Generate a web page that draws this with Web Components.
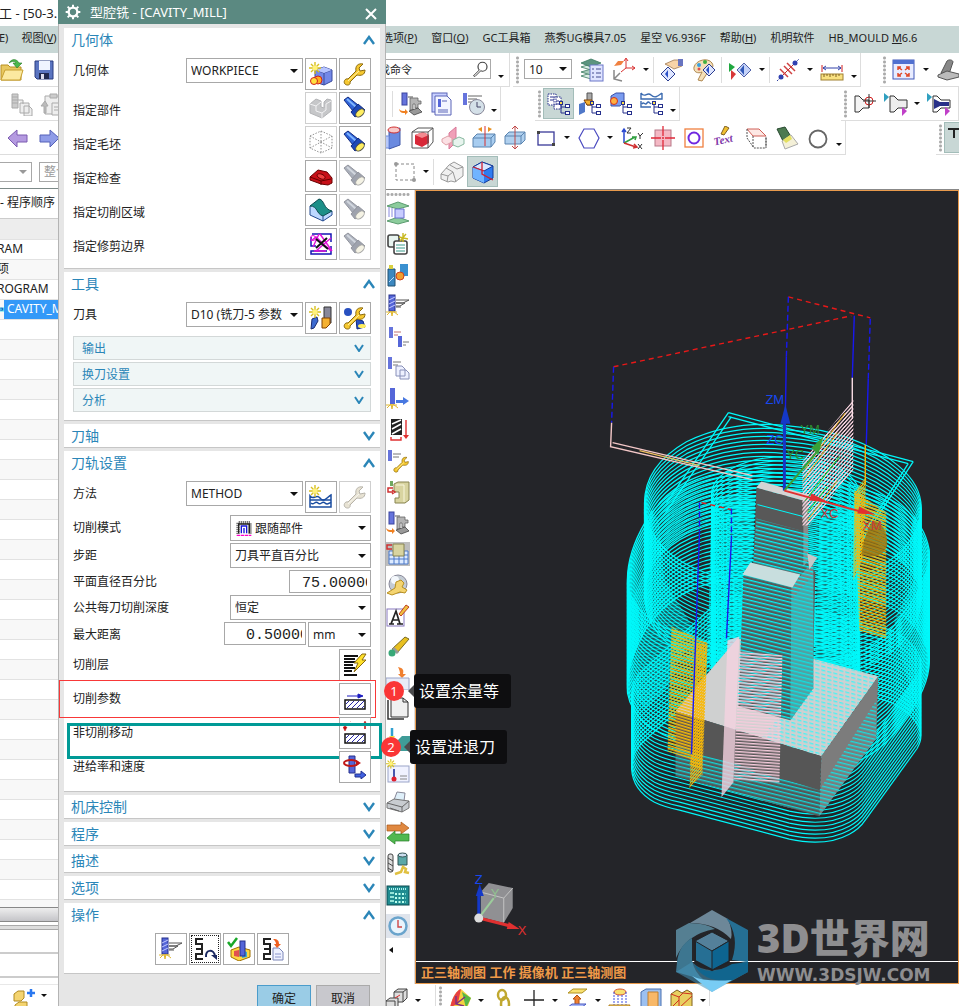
<!DOCTYPE html>
<html lang="zh-CN">
<head>
<meta charset="utf-8">
<title>型腔铣</title>
<style>
    body {
        margin: 0;
        font-family: "Noto Sans", "Noto Sans CJK SC", sans-serif;
        font-size: 12px;
        color: #222;
        background: #fff;
    }
</style>
</head>
<body>
<cam-app></cam-app>

<script>
// ---------- icon parts ----------
const WRENCH = '<path d="M2 22c-2-2 0-6 3-5l8-8c-1-5 2-8 7-7l-4 4 1 3 5-1c0 5-4 6-8 5l-7 7c1 3-3 4-5 2z" fill="#f6c830" stroke="#8a6a10"/><path d="M5 19L16 9" stroke="#fff3a8" fill="none"/>';
const TORCH = '<path d="M1 4l4-3 10 8-5 6z" fill="#2f63d8" stroke="#102a80"/><path d="M4 3l9 8" stroke="#7fb4ff" stroke-width="2"/><path d="M15 8l-7 8 4 5 10-7z" fill="#1d48b8" stroke="#102a80"/><ellipse cx="17" cy="17" rx="5" ry="3" transform="rotate(-40 17 17)" fill="#ffee60" stroke="#554"/>';
const STAR = '<path d="M6 0v12M0 6h12M2 2l8 8M10 2l-8 8" stroke="#d8c020" stroke-width="1.4"/><circle cx="6" cy="6" r="2.5" fill="#fff27a"/>';
const CUTTER = '<rect x="3" y="1" width="6" height="16" fill="#5566d8" stroke="#26308c"/><path d="M3 6l6-3M3 10l6-3M3 14l6-3" stroke="#c5ccff"/>';
const SPARK = '<path d="M1 21l4-4 1 5 1-5 5 4M0 18h11" stroke="#e0b830" fill="none"/>';
const PATHS = '<path d="M10 6h13l-6 3h-7M10 9h9l-5 3h-4M10 13h5" stroke="#555" fill="none"/>';
const PAGE = '<path d="M12 11h6l4 4v8H12z" fill="#eef1ff" stroke="#7c86b8"/><path d="M14 17h6M14 20h6" stroke="#8a94cc"/>';
const CUBE = '<path d="M6 8l9-3 8 3v11l-8 4-9-3z" fill="#7388e8" stroke="#3a4a9c"/><path d="M6 8l9 3 8-3M15 11v12" fill="none" stroke="#3a4a9c"/><path d="M6 8l9-3 8 3-8 3z" fill="#b6c4ff"/>';
const TREE = '<path d="M14 12v9M14 15h4M14 21h4" stroke="#26308c" fill="none"/><rect x="12.500" y="9.500" width="3" height="3" fill="#ffe14a" stroke="#26308c"/><rect x="18.500" y="12.500" width="4" height="3" fill="#fff" stroke="#26308c"/><rect x="18.500" y="19.500" width="4" height="3" fill="#fff" stroke="#26308c"/>';
const MACHINE = '<path d="M11 6h8v3h3v3h-3v4h-3v-4h-2v6h-3z" fill="#b4b4b4" stroke="#666" stroke-width=".8"/><path d="M10 19l9-3 4 4-8 3z" fill="#999" stroke="#444" stroke-width=".8"/>';
const ZIGZAG = '<path d="M10 2H3v5h6v5H3M9 12v5H3v5h7" fill="none" stroke="#222" stroke-width="2"/>';
const HATCH = '<rect x="2" y="13" width="20" height="9" fill="#fff" stroke="#111" stroke-width="1.500"/><path d="M4 21l7-7M9 21l7-7M14 21l7-7M3 17l3-3M19 21l2-2" stroke="#2a2aa8"/>';

const ICONS = {
    folder: '<path d="M1 7h7l2 2h11v13H1z" fill="#e8c860" stroke="#b89020"/><path d="M1 22l4-10h18l-3 10z" fill="#fbe9a0" stroke="#c8a030"/><path d="M9 5c3-5 8-4 10 0h3l-5 5-4-5h3c-1-2-4-2-7 0z" fill="#4cb84c" stroke="#287a28" stroke-width=".6"/>',
    floppy: '<path d="M3 3h18v18H5l-2-2z" fill="#5a74c0" stroke="#2a3c80"/><rect x="7" y="3" width="11" height="9" fill="#f0f4ff"/><rect x="7" y="15" width="10" height="6" fill="#222a50"/><rect x="9" y="16" width="3" height="5" fill="#dde"/>',
    pasteTree: '<g stroke="#aaa" fill="#eee"><path d="M3 2h6v14H3zM3 5h6M3 8h6M3 11h6" fill="#ccc"/><path d="M9 8h5v4M11 11h9v10H11zM15 14h5l3 3v7h-8z"/></g>',
    clipboard: '<g stroke="#aaa" fill="#eee"><path d="M5 4h17v18H5z"/><path d="M10 2h7v4h-7z" fill="#ccc"/><path d="M12 11h10v12H12zM14 15h6M14 18h6"/><path d="M1 14l4-5 3 5H6v7H4v-7z" fill="#bbb"/></g>',
    arrowL: '<path d="M2 12l9-8v5h10v7H11v5z" fill="#b49ae0" stroke="#7a5ab0"/>',
    arrowR: '<path d="M22 12l-9-8v5H3v7h10v5z" fill="#8f9ce8" stroke="#5560b8"/>',
    gear: '<circle cx="12" cy="12" r="6.500" fill="none" stroke="#fff" stroke-width="3.500"/><path d="M12 1v5M12 18v5M1 12h5M18 12h5M4 4l4 4M16 16l4 4M20 4l-4 4M8 16l-4 4" stroke="#fff" stroke-width="3"/>',
    geoNew: CUBE + '<circle cx="9" cy="18" r="4" fill="#ffb020" stroke="#d02020"/><circle cx="5" cy="19" r="3.500" fill="#ffe040" stroke="#d02020"/>' + STAR,
    wrench: WRENCH,
    torch: TORCH,
    part: '<path d="M1 8l6-5 5 2v6l3 1V6l3-3 4 1v11l-9 7-12-5z" fill="#8890a8" stroke="#606880"/><path d="M1 8l6 2v5l6 2 4-3V8l5-3M13 17v5M7 10l5-4" fill="none" stroke="#e4e6f0"/>',
    blank: '<path d="M1 6l11-5 11 5v12l-11 5-11-5zM1 6l11 6 11-6M12 12v11M12 1v11M1 18l11-6 11 6" fill="none" stroke="#222" stroke-dasharray="1.500 1.500"/>',
    check: '<path d="M1 13l8-7 9 2 5 6v5l-4 2-7-1-11-4z" fill="#c81018" stroke="#600"/><path d="M1 13l11 4 10-2M12 17v4" stroke="#600" fill="none"/><path d="M8 11c1-3 9 0 8 3s-8 0-8-3z" fill="#f04040" stroke="#600"/>',
    area: '<path d="M1 8v9l13 6 9-6v-4" fill="#bcd8ff" stroke="#234a90"/><path d="M1 8L10 1c6 1 4 10 13 12l-9 5C7 16 9 8 1 8z" fill="#1c8f88" stroke="#0c4a50"/><path d="M14 18v5" stroke="#234a90"/>',
    trim: '<path d="M3 2h19v8M22 14v8H2v-3h16M2 5v9h5" fill="none" stroke="#1414b4" stroke-width="1.500"/><path d="M11 2l12 17M4 15L10 2M7 19L22 6M2 9l5-4 15 14M5 19h12" stroke="#e010d8" stroke-width="1.400" fill="none"/><circle cx="4" cy="6" r="2.500" fill="none" stroke="#e010d8"/><path d="M7 7l12 10M18 6L7 16" stroke="#111" stroke-width="2"/>',
    toolNew: '<path d="M15 1h7v16h-7z" fill="#889" stroke="#333"/><path d="M13 12h8v6l-4 4h-4z" fill="#f4b030" stroke="#804000"/><path d="M3 13l5-2 1 4-4 7-3 1z" fill="#3c6ad0" stroke="#1a2c70"/>' + STAR,
    toolEdit: '<circle cx="5" cy="6" r="4" fill="#2850c0"/><path d="M13 13l7 2 2 6-8 2z" fill="#2850c0" stroke="#102a80"/><ellipse cx="19" cy="20" rx="4" ry="2" fill="#ffee60"/>' + WRENCH,
    methodNew: '<path d="M1 11c4 5 6-3 10 2s6 0 11-3v12H1z" fill="#fff" stroke="#1a4ca0" stroke-width="1.500"/><path d="M1 15h21M2 18c3 3 4-3 7 0s4-3 7 0 4-1 6 0" fill="none" stroke="#1a4ca0" stroke-width="1.500"/>' + STAR,
    cutLevels: '<path d="M1 3h14M1 6h11M1 9h14M1 12h9M1 15h11M1 18h8M1 22h13" stroke="#111" stroke-width="1.800"/><path d="M19 1h4l-4 6h4L11 19l4-9h-4z" fill="#ffe12a" stroke="#8a6a10"/>',
    cutParam: HATCH + '<path d="M4 9h14M15 7l5 2-5 2z" stroke="#1c1cc0" fill="#1c1cc0"/>',
    nonCut: HATCH + '<path d="M2 2v6M22 8V2" stroke="#c01010" stroke-width="1.500"/><path d="M0 6h4l-2 4zM20 4h4l-2-4zM7 0h1" fill="#c01010" stroke="#c01010" stroke-width=".5"/>',
    feed: '<path d="M6 1h6v17H6z" fill="#5566d8" stroke="#26308c"/><ellipse cx="8" cy="8" rx="7" ry="3" fill="none" stroke="#c01818" stroke-width="2"/><path d="M13 5l5 3-5 3z" fill="#c01818"/><path d="M12 19h6v-3l5 4-5 4v-2h-6z" fill="#4060e0" stroke="#203090"/>',
    generate: CUTTER + PATHS + SPARK,
    replay: ZIGZAG + '<path d="M13 20c-1-8 8-8 9-1" fill="none" stroke="#1a2860" stroke-width="2"/><path d="M18 18h6v5z" fill="#1a2860"/>',
    verify: '<path d="M4 13l8-3 11 3v7l-11 4-8-4z" fill="#ffd840" stroke="#a07000"/><path d="M7 14l5-1v7l-5-1z" fill="#e05050"/><path d="M15 13l5 2v5l-5 1z" fill="#40b0d0"/><rect x="13" y="4" width="5" height="15" fill="#5566d8" stroke="#26308c"/><path d="M1 5l3 4 6-8" fill="none" stroke="#18a828" stroke-width="2.500"/>',
    listOut: ZIGZAG + PAGE + '<path d="M12 2c5 0 6 2 6 5h2l-4 4-3-4h2c0-2-1-3-3-5z" fill="#f06020"/>',
    followPart: '<path d="M3 21V4h18v17" fill="none" stroke="#777" stroke-width="5" stroke-dasharray="2 1"/><path d="M4 20V6h16v14" fill="none" stroke="#222" stroke-width="2"/><path d="M8 20V9h8v11M12 20v-8" stroke="#1414d8" stroke-width="2" fill="none"/><path d="M1 23h22" stroke="#f0c" stroke-width="2" stroke-dasharray="5 1"/>',
    search: '<circle cx="14" cy="9" r="6" fill="#fff" stroke="#444" stroke-width="1.600"/><path d="M10 13l-8 8 2 1 8-8" fill="#fff" stroke="#444" stroke-width="1.300"/>',
    layers: '<g stroke="#3a7a60" stroke-width=".8"><path d="M1 18l10-3 10 3-10 3z" fill="#ddeee6"/><path d="M1 14l10-3 10 3-10 3z" fill="#a8ccbc"/><path d="M1 9l10-3 10 3-10 3z" fill="#ddeee6"/><path d="M1 5l10-4 10 4-10 4z" fill="#5c9480"/></g><rect x="10" y="7" width="13" height="16" fill="#dfe4ff" stroke="#6a76c8"/><path d="M12 11h2M16 11h5M12 15h2M16 15h5M12 19h2M16 19h5" stroke="#444c90"/>',
    csys: '<path d="M2 8l4-5h6l-3 4z" fill="#f08040"/><path d="M14 10V1M14 10h9M14 10l-5 4M12 3l2-3 2 3M20 8l3 2-3 2" fill="none" stroke="#d83030"/><path d="M2 12v9l8 2M2 21l6-6" fill="none" stroke="#888" stroke-width="1.500"/>',
    hand: '<path d="M5 6l9-4h8v6l-8 3-5-3z" fill="#f8d4a8" stroke="#a07850" stroke-width=".8"/><path d="M18 1h5v7h-5z" fill="#6874c0"/><path d="M1 16l7-7 7 7-7 7z" fill="#dfe6ff" stroke="#2a3c90"/><path d="M5 16l3-4v8z" fill="#2a50c8"/>',
    palette: '<path d="M2 9C4 2 16-1 20 5c3 5-2 6-4 9l-6 9-4-1 4-8c-4 2-9 0-8-5z" fill="#f4e0b8" stroke="#b08850"/><circle cx="7" cy="7" r="2" fill="#38a0e0"/><circle cx="13" cy="4" r="2" fill="#40b040"/><circle cx="7" cy="11" r="1.500" fill="#e05050"/><path d="M11 12l6-6 6 6-6 6z" fill="#dfe6ff" stroke="#2a3c90"/><path d="M14 12l3-4v8z" fill="#2a50c8"/>',
    play: '<path d="M1 5l6 4-6 5z" fill="#20a840"/><path d="M3 12l5 4-5 6z" fill="#d83838"/><path d="M9 12l7-7 7 7-7 7z" fill="#c4d2f8" stroke="#5060a8"/><path d="M12 12l4-5v10z" fill="#3058b8"/>',
    dims: '<path d="M5 19L19 5" stroke="#c03030"/><path d="M4 11l8 8M8 8l8 8M11 5l8 8" stroke="#d04040" stroke-width="1.500"/><path d="M1 23l6-6M17 7l6-6" stroke="#3040a0" stroke-dasharray="2 1"/><circle cx="5" cy="19" r="2.500" fill="#3040b0"/><circle cx="19" cy="5" r="2.500" fill="#3040b0"/>',
    ruler: '<path d="M2 7v7M22 7v7" stroke="#d02020"/><path d="M3 10h18M6 8l-3 2 3 2M18 8l3 2-3 2" fill="none" stroke="#3040a8"/><rect x="1" y="16" width="22" height="6" fill="#f8e080" stroke="#a08030"/><path d="M4 16v3M7 16v2M10 16v3M13 16v2M16 16v3M19 16v2" stroke="#806020"/>',
    fit: '<rect x="1" y="2" width="21" height="19" fill="#e8ecff" stroke="#4058b8"/><rect x="1" y="2" width="21" height="4" fill="#5070d0"/><path d="M6 12V9h3M14 9h3v3M6 15v3h3M17 15v3h-3M6 9l4 3M17 9l-4 3M6 18l4-3M17 18l-4-3" fill="none" stroke="#e04828" stroke-width="1.500"/>',
    device: '<path d="M5 15L11 3c2-2 6-1 6 1l-4 12z" fill="#888" stroke="#555"/><path d="M2 17l9-4 12 3v3l-12 3-9-3z" fill="#bbb" stroke="#555"/>',
    post: '<rect x="3" y="1" width="5" height="12" fill="#6674dc" stroke="#3a44a0"/><path d="M9 5h5" stroke="#555"/>' + MACHINE + '<path d="M0 17c1 4 3 4 6 4v2l3-3-3-3v2c-3 0-4 0-6-2z" fill="#f08020"/>',
    shopDoc: '<rect x="2" y="1" width="15" height="19" fill="#c8d0ff" stroke="#5a64b8"/><path d="M5 4h12l4 4v15H5z" fill="#f4f6ff" stroke="#5a64b8"/><path d="M8 7h3v8H8z" fill="#5566d8"/><path d="M12 9h5M8 18h10M8 20h10" stroke="#5a64b8"/>',
    clock: '<rect x="2" y="1" width="4" height="12" fill="#6674dc"/><path d="M7 4h14M7 7h9M7 10h5" stroke="#666"/><circle cx="16" cy="15" r="7.500" fill="#d4e0e8" stroke="#889"/><path d="M16 10v5h4" stroke="#446" fill="none"/>',
    progView: '<path d="M1 2h8v11H1zM7 5h7v12H7z" fill="#fff" stroke="#26308c" stroke-dasharray="1.500 1"/><path d="M3 5h4M3 8h4M9 9h3M9 12h3" stroke="#26308c"/>' + TREE,
    toolView: '<path d="M9 1h5v12H9z" fill="#aaa" stroke="#555"/><path d="M6 8h8v5H9z" fill="#f4b030" stroke="#804000"/><path d="M1 12l6-2v10l-6 3z" fill="#5078c8"/>' + TREE,
    geomView: '<path d="M2 4l5-3h8v9l-4 4H2z" fill="#7a9cf0" stroke="#3a50a8"/><circle cx="5" cy="9" r="3.500" fill="#ffb040" stroke="#d03020"/>' + TREE,
    methodView: '<path d="M1 1c4 6 6-2 10 2s7 1 11-2M1 1v6h21V1M1 9v6h10M2 12c2-3 3 2 5-1s3 2 4 0" fill="none" stroke="#3a6ab0" stroke-width="1.400"/>' + TREE,
    holeTarget: '<path d="M2 4h4l4 4h6v8h-6l-4 4H2z" fill="#f4f4f4" stroke="#333"/><circle cx="16" cy="9" r="4" fill="none" stroke="#d02020"/><path d="M10 9h13M16 2v14" stroke="#333"/>',
    holeA: '<path d="M0 1l5 4-5 5z" fill="#30a0c0"/><path d="M6 4h4l4 4h9v8h-9l-4 4H6z" fill="#eee" stroke="#333"/><path d="M18 15l5 4-5 5z" fill="#c040c8"/>',
    holeB: '<path d="M0 1l5 4-5 5z" fill="#30a0c0"/><path d="M6 4h4l4 4h9v8h-9l-4 4H6z" fill="#fff" stroke="#333"/><path d="M7 7l6 3h9v4h-9l-6 3z" fill="#283088"/><path d="M18 15l5 4-5 5z" fill="#c040c8"/>',
    tube: '<path d="M10 5l11-3v17L10 23z" fill="#6a8ae0" stroke="#4058a8"/><ellipse cx="15" cy="4" rx="6" ry="3" fill="#f8c8c8" stroke="#d03030"/><path d="M3 10h7v12H3z" fill="#b8c8f8" stroke="#6a8ae0"/>',
    cubeRed: '<path d="M5 9l8-3 6 3v8l-7 4-7-3z" fill="#d82838"/><path d="M5 9l7 3 7-3-6-3z" fill="#f48a90"/><path d="M2 6l6-4h15v14l-5 6H2zM2 6h16v16M18 6l5-4" fill="none" stroke="#555"/>',
    mirror: '<path d="M8 7l7-6v15l-7 7z" fill="#f0a0b8" stroke="#d87898"/><path d="M1 13l6-3 4 2v4l-6 3-4-3z" fill="#fbe0e4" stroke="#e0a0a8"/><path d="M12 14l6-3 5 2v5l-6 3-5-2z" fill="#e8f4ee" stroke="#88b8a0"/>',
    splitA: '<path d="M1 12l4-4h18v8l-4 5H1z" fill="#a8cdf0" stroke="#5a84b0"/><path d="M1 12h18l4-4M19 12v9" fill="none" stroke="#5a84b0"/><path d="M13 0v20" stroke="#d83030"/><path d="M10 1v5L6 3zM16 1v5l4-3z" fill="#e89020"/>',
    splitB: '<path d="M2 10l4-4h16v8l-4 4H2z" fill="#b0d0ee" stroke="#5a84b0"/><path d="M2 10h16l4-4M18 10v8" fill="none" stroke="#5a84b0"/><path d="M12 0v23M9 3l3-3 3 3M9 20l3 3 3-3" fill="none" stroke="#c04848"/>',
    rectSel: '<rect x="4" y="6" width="16" height="13" fill="none" stroke="#3a3a98" stroke-width="1.300"/><path d="M3 5h3v3H3zM18 17h3v3h-3z" fill="#444"/>',
    hex: '<path d="M7 3h10l5 9-5 10H7L2 12z" fill="#fff" stroke="#4a4ac0" stroke-width="1.200"/>',
    xyz: '<path d="M4 17V4M2 6l2-3 2 3" fill="none" stroke="#2a48d0" stroke-width="1.500"/><path d="M4 17l11-6M12 11h4l-1 3" fill="none" stroke="#30a040" stroke-width="1.500"/><path d="M4 17l12 4M14 18l3 3-4 1" fill="none" stroke="#d03030" stroke-width="1.500"/><path d="M7 2h4l-4 5h4M18 7l2 3 3-3M20 10v3M18 18l4 5M22 18l-4 5" fill="none" stroke="#333"/>',
    target: '<rect x="4" y="4" width="16" height="16" fill="#f4b8c4" stroke="#b87888"/><path d="M0 12h10M14 12h10M12 0v10M12 14v10M11 12h2" stroke="#e02838" stroke-width="1.300"/>',
    ring: '<rect x="3" y="3" width="18" height="18" fill="#fff" stroke="#f08040" stroke-width="1.300"/><circle cx="12" cy="12" r="5.500" fill="none" stroke="#7028e0" stroke-width="2"/>',
    text: '<text x="1" y="18" font-family="Liberation Serif, serif" font-weight="bold" font-style="italic" font-size="11" fill="#8038a8" transform="rotate(-12 8 16)">Text</text><path d="M8 8l4-8 4 2-5 7z" fill="#f0c030" stroke="#806020"/>',
    bbox: '<path d="M3 3h12l7 7H9z" fill="#fde8e4" stroke="#d06058"/><path d="M3 3v9l7 10h12V10M9 10v11M22 12v9" fill="none" stroke="#555" stroke-dasharray="2 1"/>',
    lamp: '<path d="M2 3l8-2 5 8-7 6z" fill="#4c7a50" stroke="#284a30"/><path d="M7 15l9-6 7 9-13 5z" fill="#f4f0d8" stroke="#aaa"/><path d="M8 14l7-5 2 4-6 4z" fill="#e4e060"/>',
    circle: '<circle cx="12" cy="13" r="8.500" fill="none" stroke="#666" stroke-width="1.800"/>',
    tm: '<path d="M0 3h11M6 3v9" stroke="#222" stroke-width="2"/><path d="M12 12V3h9v9M16 3v8" fill="none" stroke="#d02020" stroke-width="1.800"/>',
    dashed: '<rect x="3" y="4" width="18" height="16" fill="none" stroke="#888" stroke-dasharray="3 2"/><circle cx="3" cy="4" r="2" fill="#999"/><circle cx="21" cy="20" r="2" fill="#999"/>',
    blocks: '<path d="M1 14l8-9 5-3 9 5v9l-8 6-4-1-3 1-7-3z" fill="#f0f0f0" stroke="#999"/><path d="M6 8l7 4 3 10M10 5l7 4 6-2M8 16l-1 6M13 12l-5 4-7-2" fill="none" stroke="#999"/>',
    cubeBlue: '<path d="M2 7l9-5 11 4v12l-9 5-11-5z" fill="#2e7cf0" stroke="#123a98"/><path d="M2 7l11 4 9-5-11-4z" fill="#d8e6ff" stroke="#123a98"/><path d="M2 7l11 4v12l-11-5z" fill="#70b4ff"/><path d="M11 2v12l11 6M2 7l11 4" fill="none" stroke="#d02030" stroke-width="1.300"/>',
    stackGreen: '<path d="M1 5l11-4 11 4-11 3zM1 20l11-4 11 4-11 3z" fill="#8ccc9c" stroke="#5c9c70"/><path d="M9 8h9v9H9z" fill="#c8ccff" stroke="#6a70d0"/><path d="M3 6v10M6 7v9" stroke="#8a8ae0"/>',
    sheets: '<rect x="2" y="3" width="11" height="12" rx="2" fill="#e8f4f0" stroke="#444" stroke-width="1.600"/><rect x="8" y="9" width="13" height="13" rx="2" fill="#fff" stroke="#444" stroke-width="1.600"/><path d="M10 13h9M10 16h9M10 19h9" stroke="#3a9c8c"/><path d="M13 5l9 2M17 1v9M14 9l6-7" stroke="#c8b820" stroke-width="1.400"/>',
    toolCrt: '<path d="M2 6h7v17H2z" fill="#3c88c0" stroke="#205070"/><path d="M3 2h4v4H3z" fill="#d8d040"/><path d="M14 1h8v12h-8z" fill="#3a90d0"/><circle cx="14" cy="13" r="4" fill="#f0a030" stroke="#d04020"/><path d="M3 19l5-5" stroke="#bdf"/>',
    opCopy: '<rect x="3" y="2" width="4" height="11" fill="#6674dc"/><path d="M8 7h7M8 10h4" stroke="#c07070"/><rect x="12" y="11" width="4" height="11" fill="#5566d8"/><path d="M17 17h6M17 20h3" stroke="#777"/>',
    opPages: '<rect x="2" y="1" width="4" height="12" fill="#6674dc"/><path d="M7 6h8M7 9h5" stroke="#777"/><path d="M10 10h6l3 3v7h-9zM14 14h6l3 3v6h-9z" fill="#eef1ff" stroke="#8890b8"/>',
    opMove: '<rect x="4" y="1" width="5" height="16" fill="#5566d8"/><path d="M10 13h7v-3l6 4-6 4v-2h-7z" fill="#4878e0"/>' + SPARK,
    drillDown: '<path d="M5 1h11v16H5z" fill="#222"/><path d="M6 6l9-4M6 11l9-5M6 16l9-5" stroke="#fff" stroke-width="1.500"/><path d="M5 19v3h10v-3M20 2v16" fill="none" stroke="#e03030" stroke-width="1.400"/><path d="M17 17h6l-3 4z" fill="#e03030"/>',
    opWrench: '<rect x="2" y="1" width="4" height="11" fill="#6674dc"/><path d="M7 5h8M7 8h6" stroke="#777"/><g transform="translate(7 7) scale(.700)">' + WRENCH + '</g>',
    mcImport: '<path d="M8 4l4-2h11v18l-4 3H9v-5h4v-6H8z" fill="#d8d4a0" stroke="#888450"/><path d="M10 5h8v5M18 10v12" stroke="#f8f6dc" fill="none"/><path d="M4 1h3v5H4z" fill="#70a860"/><path d="M7 8H2v4h5M6 10l3 2-3 2" fill="none" stroke="#d03030" stroke-width="1.500"/>',
    mcTable: '<rect x="0" y="0" width="24" height="24" fill="#bdbdbd"/><path d="M3 9h19v13H3zM3 13h19M3 17h19M8 9v13M13 9v13M18 9v13" fill="#dceaff" stroke="#4a78c8"/><path d="M7 2h11v12H7z" fill="#d8d4a0" stroke="#888450"/><path d="M6 3H1v4h5" fill="none" stroke="#d03030" stroke-width="1.500"/>',
    ballWrench: '<circle cx="12" cy="11" r="9" fill="#c4ccd4" stroke="#889"/><circle cx="9" cy="7" r="4" fill="#f4f8fc"/><path d="M1 20l8-5 1-6 5-2 3 3-2 4 5 3-2 3-5-1-8 3z" fill="#f4d470" stroke="#b89020"/>',
    editA: '<rect x="1" y="5" width="17" height="17" fill="#fff" stroke="#8878c0"/><path d="M3 20h5M5 20l5-13 4 13M11 20h6M7 16h5" stroke="#222" stroke-width="1.700" fill="none"/><path d="M13 10l7-9 3 2-8 9z" fill="#f0c040" stroke="#c04020"/>',
    pencil: '<path d="M6 14L19 2l4 2-12 14z" fill="#e8c020" stroke="#7a6a20"/><path d="M7 13l5 5" stroke="#999" stroke-width="3"/><circle cx="6" cy="18" r="3.500" fill="#38a878"/>',
    insert: '<path d="M12 1c5 1 6 3 5 7h3l-4 4-4-4h2c0-3-1-5-2-7z" fill="#f08030"/><path d="M0 12h23v12H0z" fill="#e8ecf8" stroke="#9aa4c8"/>',
    pages: '<path d="M2 3v19h16" fill="none" stroke="#333" stroke-width="1.500"/><path d="M5 1h12l5 4v15H5z" fill="#f0f0f0" stroke="#333"/><path d="M17 1v4h5" fill="none" stroke="#333"/>',
    teal: '<path d="M12 12l4-4h8v15H12z" fill="#3f9c98"/><path d="M6 0v10" stroke="#30a0d0" stroke-width="2.500"/><path d="M3 8h6l-3 4z" fill="#f0e040"/>',
    thermo: '<rect x="2" y="7" width="21" height="16" fill="#f0f2ff" stroke="#9aa4c8"/><path d="M8 10v10" stroke="#4858b0" stroke-width="2"/><circle cx="8" cy="20" r="2.500" fill="#e02030"/><path d="M14 17h7M14 20h7" stroke="#888"/><g transform="scale(.800)">' + STAR + '</g>',
    printer: '<path d="M8 10l3-8 8 1-1 8z" fill="#dff0fa" stroke="#889"/><path d="M1 13l7-4 15 2v7l-7 4-15-4z" fill="#c8ccd0" stroke="#777"/><path d="M1 13l15 4 7-6M16 17v5M4 18l9 3" fill="none" stroke="#666"/>',
    swap: '<path d="M1 4h14V1l8 6-8 6V10H1z" fill="#e08840" stroke="#a85818" stroke-width=".7"/><path d="M23 13H9v-3l-8 7 8 6v-3h14z" fill="#50b850" stroke="#288028" stroke-width=".7"/>',
    drills: '<rect x="2" y="2" width="5" height="18" rx="2" fill="#ddd" stroke="#444"/><path d="M2 6l5 3M2 11l5 3M2 16l5 3" stroke="#444"/><path d="M12 3h9v10h-9z" fill="#5aa8a8" stroke="#355"/><ellipse cx="16.500" cy="3" rx="4.500" ry="2" fill="#cde" stroke="#355"/><path d="M9 22l6-2 2-5 3 2-1 3 4 1" fill="none" stroke="#e0c040" stroke-width="2.500"/>',
    panel: '<rect x="1" y="3" width="22" height="19" fill="#1f8c90" stroke="#0c4a50"/><path d="M3 6h17" stroke="#aee" stroke-width="2" stroke-dasharray="1 1"/><path d="M4 10h4M4 14h4M4 18h4" stroke="#bfe" stroke-width="1.500"/><path d="M9 11h11M9 15h11M9 19h11" stroke="#bfe" stroke-width="2" stroke-dasharray="2 1.500"/>',
    history: '<rect x="0" y="0" width="24" height="24" fill="#dfe4ec"/><circle cx="12" cy="12" r="8.500" fill="#e8f4fc" stroke="#6aa4cc" stroke-width="2.500"/><path d="M12 6v7h4" stroke="#d04848" fill="none" stroke-width="1.400"/>',
    cubes: '<g fill="#ddd" stroke="#444"><path d="M9 4l4-3h9v9l-4 4H9z"/><path d="M9 4h9v10M18 4l4-3" fill="none"/><path d="M1 13l4-3h8v9l-3 4H1z"/><path d="M1 13h9v10" fill="none"/></g><path d="M10 10l5-3" stroke="#e03030"/>',
    rainbow: '<path d="M2 20C4 9 9 2 13 1l10 9-5 13z" fill="#f4d040"/><path d="M2 20C4 9 9 2 13 1l-3 14z" fill="#e84040"/><path d="M14 4l9 6-5 10z" fill="#58b848"/><path d="M8 8v8l8 2M8 16l9-7" fill="none" stroke="#803080" stroke-width="1.500"/>',
    chain: '<g fill="none" stroke="#c0a830" stroke-width="2.500"><ellipse cx="11" cy="7" rx="4" ry="5"/><ellipse cx="14" cy="16" rx="4" ry="7"/></g>',
    plus: '<path d="M12 2v20M2 12h20" stroke="#222" stroke-width="1.300"/>',
    extrude: '<path d="M3 5l5-4h14l-5 4z" fill="#f8e070" stroke="#b09020"/><path d="M10 17v-6H8l4-4 4 4h-2v6z" fill="#f08030" stroke="#b05010"/><path d="M2 20l5-4h14l-5 4z" fill="#a8b8f8" stroke="#4858c0"/>',
    boss: '<ellipse cx="12" cy="4" rx="6" ry="3" fill="#f8e070" stroke="#d05030"/><path d="M6 4v13M18 4v13M10 7v11M14 7v11" stroke="#4050e0" stroke-dasharray="2 1"/><path d="M1 17h21l-3 6H1z" fill="#f0c860" stroke="#b08020"/>',
    door: '<path d="M2 4l5-3h15v19l-5 3H2z" fill="#9cc0f0" stroke="#4a70b0"/><path d="M9 4h10v15H9z" fill="#f8b868" stroke="#c08030"/><path d="M15 18h8v5h-8z" fill="#4a70d0"/>',
    crate: '<path d="M1 6l6-4 5 3 5-3 5 3v15l-9 3-12-3z" fill="#e8d060" stroke="#806020"/><path d="M1 6l8 3v13M9 9l4-4 9 1M1 20l8-8M9 20L22 8" fill="none" stroke="#d03020"/>',
    addPart: '<path d="M3 5l4-3h6v7l-3 3H3zM4 16l4-3h8v8H4z" fill="#f4d470" stroke="#b08a20"/><path d="M20 0v8M16 4h8" stroke="#2a78f0" stroke-width="2.500"/>',
    treeTag: '<rect x="0" y="0" width="24" height="24" fill="#50e4ec"/><path d="M2 4h14v12H2" fill="none" stroke="#1414b4" stroke-width="4"/>'
};

function define(name, markup, setup) {
    const template = document.createElement('template');
    template.innerHTML = markup;
    customElements.define(name, class extends HTMLElement {
        constructor() {
            super();
            this.attachShadow({ mode: 'open' });
            this.shadowRoot.appendChild(template.content.cloneNode(true));
        }

        connectedCallback() {
            if (setup) setup(this, this.shadowRoot);
        }
    });
}

// ---------- small pieces ----------
define('nx-icon', `
    <style>
        :host { display: block; width: 24px; height: 24px; flex: none; }
        svg { display: block; width: 100%; height: 100%; }
    </style>
    <svg viewBox="0 0 24 24" aria-hidden="true"></svg>
`, (el, root) => {
    root.querySelector('svg').innerHTML = ICONS[el.getAttribute('name')] || '';
});

define('tool-button', `
    <style>
        :host { display: block; flex: none; width: var(--cell, 31px); height: var(--cell-height, 31px); }
        button {
            display: flex; align-items: center; justify-content: center;
            width: 100%; height: 100%; padding: 0; border: 1px solid transparent; background: none;
            box-sizing: border-box;
        }
        :host([active]) button { background: #c8d7d5; border-color: #a3bdb9; }
    </style>
    <button type="button"><nx-icon></nx-icon></button>
`, (el, root) => {
    const name = el.getAttribute('icon');
    root.querySelector('nx-icon').setAttribute('name', name);
    root.querySelector('nx-icon').connectedCallback();
    root.querySelector('button').setAttribute('aria-label', name);
});

define('tool-drop', `
    <style>
        :host { display: flex; flex: none; width: 12px; align-items: center; justify-content: center; align-self: stretch; }
        :host([low]) { align-items: flex-end; padding-bottom: 8px; box-sizing: border-box; }
        i { border: 3px solid transparent; border-top-color: #111; border-bottom: 0; }
    </style>
    <i></i>
`);

define('tool-sep', `
    <style>
        :host { display: block; flex: none; width: 1px; height: 26px; margin: 0 2px 0 1px; background: #ddd; }
    </style>
`);

define('tool-strip', `
    <style>
        :host {
            display: flex; flex: none; align-items: center; height: 33px;
            border-right: 1px solid #ddd; border-bottom: 1px solid #ddd;
        }
        :host([grip])::before {
            content: ""; width: 3px; height: 28px; margin: 0 2px 0 3px;
            background: radial-gradient(circle, #aaa 1px, transparent 2px) 0 0 / 3px 4px;
        }
    </style>
    <slot></slot>
`);

define('tool-row', `
    <style>
        :host { display: flex; height: 34px; overflow: hidden; flex: none; }
    </style>
    <slot></slot>
`);

// ---------- dialog pieces ----------
define('panel-section', `
    <style>
        :host { display: block; margin: 0 5px 3px; background: #fff; border-bottom: 1px solid #c6c6c6; }
        header { display: flex; justify-content: space-between; align-items: center; height: 23px; padding: 1px 5px 0 7px; box-sizing: border-box; }
        h2 { margin: 0; font-size: 14px; line-height: 20px; font-weight: normal; color: #2b86b8; }
        svg { width: 12px; height: 10px; fill: none; stroke: #2b86b8; stroke-width: 2.4; }
        div { display: grid; gap: 2px; padding: 7px 9px 8px; }
        :host([collapsed]) div { display: none; }
    </style>
    <header><h2></h2><svg viewBox="0 0 12 10"><path/></svg></header>
    <div><slot></slot></div>
`, (el, root) => {
    root.querySelector('h2').textContent = el.getAttribute('heading');
    root.querySelector('path').setAttribute('d', el.hasAttribute('collapsed') ? 'M1 1l5 7 5-7' : 'M1 9l5-7 5 7');
});

define('sub-section', `
    <style>
        :host {
            display: flex; justify-content: space-between; align-items: center; height: 24px;
            padding: 0 6px 0 8px; box-sizing: border-box; background: #f0f6f6; border: 1px solid #d3d8d8; color: #2b86b8;
        }
        svg { width: 10px; height: 8px; fill: none; stroke: #2b86b8; stroke-width: 2; }
    </style>
    <slot></slot><svg viewBox="0 0 10 8"><path d="M1 1l4 6 4-6"/></svg>
`);

define('form-row', `
    <style>
        :host { display: flex; gap: 2px; align-items: flex-start; position: relative; }
        .label { flex: 1; align-self: center; line-height: 18px; white-space: nowrap; }
        :host([top]) .label { align-self: flex-start; line-height: 25px; }
        :host([low]) .label { padding-top: 5px; }
        :host([mark])::after { content: ""; position: absolute; pointer-events: none; }
        :host([mark="red"])::after { inset: -3px -5px -3px -14px; border: 1px solid #f83838; }
        :host([mark="teal"])::after { inset: 6px -11px -10px -6px; border: 3px solid #009a96; }
    </style>
    <div class="label"><slot name="label"></slot></div><slot></slot>
`);

define('icon-button', `
    <style>
        :host { display: block; width: 32px; height: 32px; }
        button {
            display: flex; align-items: center; justify-content: center; width: 32px; height: 32px;
            padding: 0; background: #fff; border: 1px solid #a8a8a8; box-sizing: border-box;
        }
        button:disabled { border-color: #cfcfcf; }
        button:disabled nx-icon { filter: grayscale(.8); opacity: .5; }
        :host([focused]) nx-icon { outline: 1px dotted #222; outline-offset: 1px; }
    </style>
    <button type="button"><nx-icon></nx-icon></button>
`, (el, root) => {
    const button = root.querySelector('button');
    const icon = root.querySelector('nx-icon');
    icon.setAttribute('name', el.getAttribute('icon'));
    icon.connectedCallback();
    button.disabled = el.hasAttribute('disabled');
    button.setAttribute('aria-label', el.getAttribute('icon'));
});

define('combo-box', `
    <style>
        :host { display: grid; align-items: center; height: 25px; }
        ::slotted(select) {
            grid-area: 1 / 1; appearance: none; width: 100%; height: 100%; margin: 0; padding: 0 19px 0 4px;
            border: 1px solid #a8a8a8; border-radius: 0; background: #fff; box-sizing: border-box;
            font: inherit; color: inherit; opacity: 1;
        }
        ::slotted(nx-icon) { grid-area: 1 / 1; z-index: 1; width: 16px; height: 16px; margin-left: 6px; }
        :host([with-icon]) { height: 26px; }
        :host([with-icon]) ::slotted(select) { padding-left: 24px; }
        i { grid-area: 1 / 1; justify-self: end; z-index: 1; margin-right: 5px; border: 4px solid transparent; border-top-color: var(--arrow, #111); border-bottom: 0; pointer-events: none; }
    </style>
    <slot></slot><i></i>
`);

define('note-callout', `
    <style>
        :host { position: absolute; display: flex; align-items: center; z-index: 3; }
        b { width: 20px; height: 20px; border-radius: 10px; background: #fa3636; color: #fff; font-size: 13px; line-height: 20px; font-weight: normal; text-align: center; }
        i { margin-left: var(--lead, 4px); border: 6px solid transparent; border-left: 0; border-right-color: #4a4a4c; }
        span { height: 34px; padding: 0 12px 0 5px; border-radius: 3px; background: #0e0e10; color: #fff; font-size: 16px; line-height: 34px; white-space: nowrap; }
    </style>
    <b></b><i></i><span><slot></slot></span>
`, (el, root) => {
    root.querySelector('b').textContent = el.getAttribute('number');
});

define('mill-dialog', `
    <style>
        :host { display: block; position: relative; z-index: 2; background: #e6e6e6; border: 1px solid #b4b4b4; border-width: 0 1px; }
        .title { display: flex; align-items: center; height: 24px; margin: 0 -1px 4px; padding: 0 8px 0 7px; background: #5b8981; color: #fff; }
        .title nx-icon { width: 16px; height: 16px; }
        h1 { flex: 1; margin: 0 0 0 9px; font-size: 13px; line-height: 24px; font-weight: normal; }
        .close { width: 14px; height: 24px; padding: 0; border: 0; background: none; }
        .close svg { display: block; width: 12px; height: 12px; margin: 3px auto 0; stroke: #fff; stroke-width: 2; }
        .w117 { width: 117px; }
        .w141 { width: 141px; }
        .w63 { width: 63px; }
        input {
            width: 82px; height: 23px; box-sizing: border-box; margin: 0; border: 1px solid #a8a8a8; border-radius: 0;
            padding: 3px 3px 0 12px; font: 15px "Liberation Mono", monospace; color: #222;
        }
        #distance { padding-left: 21px; }
        .ops { display: flex; gap: 2px; margin-left: 82px; }
        footer { display: flex; justify-content: flex-end; gap: 5px; margin-top: 11px; padding-right: 15px; }
        footer button { width: 54px; height: 26px; padding: 0; border: 1px solid #aaa; background: #c8c8cd; font: inherit; color: #222; }
        footer .ok { background: #9acce6; border-color: #4a9ccb; }
        .first { left: 311px; top: -9px; }
        .second { left: 308px; top: 13px; --lead: 3px; }
    </style>
    <div class="title">
        <nx-icon name="gear"></nx-icon>
        <h1>型腔铣 - [CAVITY_MILL]</h1>
        <button class="close" aria-label="关闭"><svg viewBox="0 0 12 12"><path d="M1 1l10 10M11 1L1 11"/></svg></button>
    </div>
    <panel-section heading="几何体">
        <form-row top>
            <label slot="label" for="geometry">几何体</label>
            <combo-box class="w117"><select id="geometry"><option>WORKPIECE</option></select></combo-box>
            <icon-button icon="geoNew"></icon-button><icon-button icon="wrench"></icon-button>
        </form-row>
        <form-row low><span slot="label">指定部件</span><icon-button icon="part" disabled></icon-button><icon-button icon="torch"></icon-button></form-row>
        <form-row low><span slot="label">指定毛坯</span><icon-button icon="blank" disabled></icon-button><icon-button icon="torch"></icon-button></form-row>
        <form-row low><span slot="label">指定检查</span><icon-button icon="check"></icon-button><icon-button icon="torch" disabled></icon-button></form-row>
        <form-row low><span slot="label">指定切削区域</span><icon-button icon="area"></icon-button><icon-button icon="torch" disabled></icon-button></form-row>
        <form-row low><span slot="label">指定修剪边界</span><icon-button icon="trim"></icon-button><icon-button icon="torch" disabled></icon-button></form-row>
    </panel-section>
    <panel-section heading="工具">
        <form-row top>
            <label slot="label" for="tool">刀具</label>
            <combo-box class="w117"><select id="tool"><option>D10 (铣刀-5 参数</option></select></combo-box>
            <icon-button icon="toolNew"></icon-button><icon-button icon="toolEdit"></icon-button>
        </form-row>
        <sub-section>输出</sub-section>
        <sub-section>换刀设置</sub-section>
        <sub-section>分析</sub-section>
    </panel-section>
    <panel-section heading="刀轴" collapsed></panel-section>
    <panel-section heading="刀轨设置">
        <form-row top>
            <label slot="label" for="method">方法</label>
            <combo-box class="w117"><select id="method"><option>METHOD</option></select></combo-box>
            <icon-button icon="methodNew"></icon-button><icon-button icon="wrench" disabled></icon-button>
        </form-row>
        <form-row>
            <label slot="label" for="pattern">切削模式</label>
            <combo-box class="w141" with-icon><nx-icon name="followPart"></nx-icon><select id="pattern"><option>跟随部件</option></select></combo-box>
        </form-row>
        <form-row>
            <label slot="label" for="stepover">步距</label>
            <combo-box class="w141"><select id="stepover"><option>刀具平直百分比</option></select></combo-box>
        </form-row>
        <form-row>
            <label slot="label" for="percent">平面直径百分比</label>
            <input id="percent" value="75.00000">
        </form-row>
        <form-row>
            <label slot="label" for="depth">公共每刀切削深度</label>
            <combo-box class="w141"><select id="depth"><option>恒定</option></select></combo-box>
        </form-row>
        <form-row>
            <label slot="label" for="distance">最大距离</label>
            <input id="distance" value="0.50000">
            <combo-box class="w63"><select aria-label="单位"><option>mm</option></select></combo-box>
        </form-row>
        <form-row><span slot="label">切削层</span><icon-button icon="cutLevels"></icon-button></form-row>
        <form-row mark="red"><span slot="label">切削参数</span><icon-button icon="cutParam"></icon-button>
            <note-callout class="first" number="1">设置余量等</note-callout></form-row>
        <form-row mark="teal"><span slot="label">非切削移动</span><icon-button icon="nonCut"></icon-button>
            <note-callout class="second" number="2">设置进退刀</note-callout></form-row>
        <form-row><span slot="label">进给率和速度</span><icon-button icon="feed"></icon-button></form-row>
    </panel-section>
    <panel-section heading="机床控制" collapsed></panel-section>
    <panel-section heading="程序" collapsed></panel-section>
    <panel-section heading="描述" collapsed></panel-section>
    <panel-section heading="选项" collapsed></panel-section>
    <panel-section heading="操作">
        <div class="ops">
            <icon-button icon="generate"></icon-button><icon-button icon="replay" focused></icon-button>
            <icon-button icon="verify"></icon-button><icon-button icon="listOut"></icon-button>
        </div>
    </panel-section>
    <footer><button class="ok">确定</button><button>取消</button></footer>
`);

// ---------- left strip: operation navigator ----------
define('op-navigator', `
    <style>
        :host { display: flex; flex-direction: column; overflow: hidden; background: #fff; white-space: nowrap; }
        .caption { height: 26px; line-height: 26px; font-size: 13px; text-indent: -1px; }
        nav { display: flex; gap: 14px; height: 27px; line-height: 24px; background: #c8d7d5; font-size: 11px; text-indent: -1px; }
        tool-row { border-bottom: 1px solid #ddd; box-sizing: border-box; align-items: center; --cell: 31px; }
        .open { --cell: 32px; margin-left: -4px; }
        .paste { margin-left: 5px; }
        .back { margin-left: 2px; }
        .filters { gap: 7px; border-bottom: 1px solid #7d8a88; color: #999; --arrow: #999; }
        combo-box { height: 20px; flex: none; }
        .scope { width: 33px; margin-left: -1px; }
        .whole { width: 60px; }
        .name { flex: none; height: 29px; line-height: 28px; border-bottom: 1px solid #ccc; }
        .head { flex: none; height: 20px; background: #ededed; }
        ul { flex: 1; margin: 0; padding: 0; list-style: none; overflow: hidden; }
        li { display: flex; height: 20px; line-height: 18px; border-top: 1px solid #e2e2e2; box-sizing: border-box; }
        li:nth-child(even) { background: #f8f8f8; }
        li span { flex: 1; text-indent: -3px; }
        .selected span { background: #3399f8; color: #fff; padding-left: 3px; text-indent: 0; }
        .selected nx-icon { width: 4px; height: 19px; }
        .scroll { flex: none; height: 13px; border: 1px solid #888; border-width: 1px 0; background: linear-gradient(#eee, #c4c4c8); }
        .split { flex: none; height: 3px; margin-top: 3px; background: #ddd; border: 1px solid #aaa; border-width: 1px 0; }
        .pane { flex: none; height: 22px; border-bottom: 2px solid #ccc; }
        footer { display: flex; flex: none; height: 21px; margin-top: 6px; border-top: 1px solid #e8e8e8; overflow: hidden; padding-left: 7px; }
    </style>
    <div class="caption">工 - [50-3.</div>
    <nav><span>E)</span><span>视图(<u>V</u>)</span></nav>
    <tool-row><tool-button class="open" icon="folder"></tool-button><tool-button icon="floppy"></tool-button></tool-row>
    <tool-row><tool-button class="paste" icon="pasteTree"></tool-button><tool-button icon="clipboard"></tool-button></tool-row>
    <tool-row><tool-button class="back" icon="arrowL"></tool-button><tool-button icon="arrowR"></tool-button></tool-row>
    <tool-row class="filters">
        <combo-box class="scope"><select aria-label="过滤器" disabled></select></combo-box>
        <combo-box class="whole"><select aria-label="范围" disabled><option>整个</option></select></combo-box>
    </tool-row>
    <div class="name">- 程序顺序</div>
    <div class="head"></div>
    <ul></ul>
    <div class="scroll"></div>
    <div class="split"></div>
    <div class="pane"></div>
    <div class="pane"></div>
    <footer><tool-button icon="addPart"></tool-button><tool-drop></tool-drop></footer>
`, (el, root) => {
    const rows = ['<li><span>RAM</span></li>', '<li><span>项</span></li>', '<li><span>ROGRAM</span></li>',
        '<li class="selected"><nx-icon name="treeTag"></nx-icon><span>CAVITY_M</span></li>'];
    while (rows.length < 60) rows.push('<li></li>');
    root.querySelector('ul').innerHTML = rows.join('');
});

// ---------- graphics window ----------
function stack(id, from, to, step, width) {
    let out = '';
    for (let y = from; y <= to; y += step) out += `<use href="#${id}" y="${y}" stroke-width="${width}"/>`;
    return out;
}

define('cam-viewport', `
    <style>
        :host { display: flex; flex-direction: column; min-width: 0; background: #242529; border: 1px solid #e89a4c; overflow: hidden; }
        svg { display: block; flex: 1; min-height: 0; width: 100%; }
        text { font: 13px "Liberation Sans", sans-serif; }
        p { margin: 0; flex: none; height: 21px; line-height: 21px; padding-left: 5px; border-top: 1px solid #fff; color: #f09a48; font-size: 13px; font-weight: bold; }
    </style>
    <svg viewBox="416 190 543 771" preserveAspectRatio="xMidYMid slice"></svg>
    <p>正三轴测图 工作 摄像机 正三轴测图</p>
`, (el, root) => {
    root.querySelector('svg').innerHTML = `
        <defs>
            <path id="low" d="M632 768q1 22 23 34q8 4 25 8l110 29q36 8 60-5q10-5 16-14l52-72q8-14-1-26q-13-18-38-24l-120-30q-28-6-48 12l-70 64q-9 10-9 24z"/>
            <path id="wide" d="M628 695q6 34 58 50q70 24 134 26q54-2 84-48q28-36 26-64q-8-42-58-58q-66-22-140-20q-58 6-86 50q-20 34-18 64z"/>
            <path id="top" d="M645 506q-2-40 42-65q46-22 100-16q72 6 112 40q24 20 23 44q-4 44-60 66q-60 18-124 6q-88-18-93-75z"/>
            <ellipse id="core" cx="786" cy="498" rx="74" ry="38"/>
            <pattern id="cy" width="12" height="4" patternUnits="userSpaceOnUse" patternTransform="skewY(14)"><rect width="12" height="1.400" fill="#00f4f6"/></pattern>
            <pattern id="dots" width="6" height="4" patternUnits="userSpaceOnUse" patternTransform="skewY(14)"><rect width="4" height="1.400" fill="#4af2f4"/></pattern>
            <pattern id="mesh" width="3" height="3" patternUnits="userSpaceOnUse"><path d="M0 0h3v2H0z" fill="#00f8fa"/></pattern>
            <pattern id="gold" width="4" height="3" patternUnits="userSpaceOnUse" patternTransform="skewY(17)"><rect width="4" height="1.600" fill="#f8b808"/></pattern>
            <pattern id="goldUp" width="3" height="3" patternUnits="userSpaceOnUse" patternTransform="skewY(-50)"><rect width="3" height="1.800" fill="#f8b808"/></pattern>
            <pattern id="pink" width="4" height="3" patternUnits="userSpaceOnUse" patternTransform="skewY(4)"><rect width="4" height="1.500" fill="#f6ccdc"/></pattern>
            <pattern id="pinkUp" width="3" height="4" patternUnits="userSpaceOnUse" patternTransform="skewY(-48)"><rect width="3" height="2" fill="#f4d0dc"/></pattern>
        </defs>
        <g fill="none" stroke="#00f8fa">
            ${stack('low', -72, 0, 4, 1.2)}
            ${stack('wide', -110, 0, 4, 1.3)}
            ${stack('top', 0, 92, 4, 1.2)}
            ${stack('core', -4, 180, 4, 1.2)}
            <path d="M729 412l185 49M729 416l180 47M729 412l-62 90M732 416l-66 96M914 461l-52 80M909 463l-42 66" stroke-width="1.300"/>
        </g>
        <path d="M712 500l12-4h32l-6 120-12 30-20 20-10-6zM820 510l38-6 2 150-4 40-20-10-20-10z" fill="url(#mesh)" opacity=".8"/>
        <path d="M645 500l14 20 6 60 30 50-30 60-20 20-17-30v-70l17-40zM921 500l-10 30 4 50-20 40 10 50 14 40 5-30 6-80-4-60-5-10z" fill="url(#mesh)" opacity=".55"/>

        <path d="M676 711l62-73 141 38-57 80z" fill="#cfd0d0"/>
        <path d="M676 711l146 45-2 60-144-40z" fill="#565656"/>
        <path d="M822 756l57-80-2 62-57 78z" fill="#7c7c7c"/>
        <path d="M740 640l139 36-57 80-60-19 52-60z" fill="url(#dots)"/>
        <path d="M676 745l144 45 57-90v38l-57 78-144-40z" fill="url(#cy)" opacity=".8"/>

        <path d="M757 487l47 13 4 60 8 12-3 116-22 32-52-14 5-130 10-14z" fill="#585858"/>
        <path d="M792 586l22-26v128l-23 32z" fill="#7c8080"/>
        <path d="M804 500l5-6v66l-5 6z" fill="#8a8a8a"/>
        <path d="M757 487l5-6 47 13-5 6z" fill="#d4d4d4"/>
        <path d="M757 518l52 14v30l5 0v128l-23 30-53-16 6-130 10-14z" fill="url(#cy)"/>
        <path d="M792 600l22-26v114l-23 32z" fill="#20c8ca" opacity=".45"/>
        <path d="M751 562l50 12-8 13-50-13z" fill="#c8dede"/>
        <path d="M808 553l10 4-8 12z" fill="#c4c8c8"/>
        <path d="M758 504l46 12 4-5" fill="none" stroke="#00f8fa"/>

        <path d="M672 626l36 16-6 128-12-6 1-5-23-8z" fill="url(#gold)"/>
        <path d="M696 642l12 2-5 130-13 14z" fill="url(#goldUp)"/>
        <path d="M855 490l32 22v126l-27-8z" fill="url(#gold)"/>
        <path d="M855 492l12-16-3 80-10 24z" fill="url(#goldUp)"/>
        <path d="M874 520q14 4 14 24q-4 16-26 10q4-24 12-34z" fill="#9a7414" opacity=".8"/>
        <path d="M740 650l43 5-3 128-46-3z" fill="url(#pink)"/>
        <path d="M728 640l12-4-6 146-12 15z" fill="#f4d2e0" opacity=".8"/>
        <path d="M854 399v70l-44 56-7 0v-64z" fill="url(#pinkUp)"/>
        <path d="M846 412l-40 56M838 432l-34 48M838 480l-30 40" stroke="#e0a810"/>
        <path d="M806 500l34-44M808 512l20-26" stroke="#18d020"/>

        <g fill="none" stroke-width="1.400">
            <path d="M789 296l82 21M614 366l238-51M702 502l30 7" stroke="#e81818" stroke-dasharray="5 4"/>
            <path d="M789 296l-2 60M614 366l-2 56M871 318l-2 60M700 502v30M732 508v30" stroke="#1818f0" stroke-dasharray="6 3"/>
            <path d="M787 356l-2 110M855 315l-2 62M869 378l-2 66M700 532l-8 222M732 538l-5 100" stroke="#1818f0"/>
            <path d="M612 422l-1 24 142 33M613 442l140 33" stroke="#f4c8c8"/>
            <path d="M640 450l60 15" stroke="#f0c060"/>
            <path d="M853 377v40" stroke="#f8dce4"/>
            <path d="M866 444v40" stroke="#f8b808"/>
            <path d="M785 490V418" stroke="#1438c8" stroke-width="3"/>
            <path d="M785 490l32-38" stroke="#38a038" stroke-width="2"/>
            <path d="M785 490l80 22" stroke="#e03030" stroke-width="2"/>
        </g>
        <path d="M786 404l5 19h-10z" fill="#1438c8"/>
        <path d="M824 436l-12 11 7 7z" fill="#38a038"/>
        <path d="M830 502l-18-9-2 7zM876 514l-16-8-2 7z" fill="#e03030"/>
        <text x="766" y="403" fill="#1848f0">ZM</text><text x="767" y="443" fill="#1848f0">ZC</text>
        <text x="801" y="433" fill="#2c8c30">YM</text><text x="787" y="458" fill="#2c8c30">YC</text>
        <text x="821" y="517" fill="#c83838">XC</text><text x="863" y="529" fill="#c83838">XM</text>

        <path d="M481 892l8-9 24 5v20l-9 15-23-6z" fill="#9c9c9e" opacity=".9"/>
        <path d="M481 892l23 6 9-10M504 898v24" fill="none" stroke="#c4c4c4"/>
        <path d="M479 918l15-20" stroke="#9ccc9c" stroke-width="2"/>
        <path d="M479 918V894" stroke="#1438c8" stroke-width="3"/><path d="M480 884l4 12h-8z" fill="#1438c8"/>
        <path d="M479 918l32 8" stroke="#e03030" stroke-width="3"/><path d="M520 929l-11-7-2 7z" fill="#e03030"/>
        <circle cx="479" cy="918" r="4.500" fill="#ddd"/>
        <text x="475" y="884" fill="#1848f0">Z</text><text x="491" y="898" fill="#90c090">Y</text><text x="518" y="935" fill="#e03030">X</text>
    `;
});

define('site-mark', `
    <style>
        :host { position: absolute; right: 22px; bottom: 14px; display: flex; gap: 9px; align-items: flex-start; z-index: 1; pointer-events: none; color: #8e8e90; }
        svg { width: 72px; height: 82px; flex: none; }
        div { width: 180px; white-space: nowrap; font-weight: bold; }
        strong { display: block; margin-top: 6px; font-size: 40px; line-height: 44px; }
        small { display: block; font: bold 17px/20px "DejaVu Sans", sans-serif; margin-top: 5px; }
    </style>
    <svg viewBox="0 0 72 82">
        <path d="M36 0l16 9q5 12 3 20Q40 13 14 13z" fill="#6d8798"/>
        <path d="M50 8l22 12v32l-16-2Q64 26 50 8z" fill="#256f94"/>
        <path d="M0 20l13-7q17 0 26 6Q10 24 0 48z" fill="#557f92"/>
        <path d="M1 52q2-17 15-24v22q2 12 12 20L0 62z" fill="#3d7690"/>
        <path d="M16 52q16 17 56-2v12L36 82 0 62z" fill="#4593b8" opacity=".55"/>
        <path d="M18 54q14 14 38 0l16-2v10l-17 9Q26 72 18 54z" fill="#11658e"/>
        <path d="M16 66q12 6 40 4L36 82z" fill="#78ccf4"/>
        <path d="M36 22l17 9v20L36 60l-17-9V31z" fill="#266f94" stroke="#222327" stroke-width="2"/>
        <path d="M36 22l17 9-17 10-17-10z" fill="#54809a" stroke="#222327"/><path d="M36 41v19l17-9V31z" fill="#0d6490" stroke="#222327"/>
    </svg>
    <div><strong>3D世界网</strong><small>WWW.3DSJW.COM</small></div>
`);

// ---------- right side of the main window ----------
define('work-area', `
    <style>
        :host { display: flex; flex-direction: column; min-width: 0; position: relative; overflow: hidden; background: #fff; }
        .caption { flex: none; height: 26px; }
        nav { display: flex; flex: none; gap: 14px; height: 27px; background: #c8d7d5; font-size: 11px; line-height: 24px; white-space: nowrap; overflow: hidden; }
        nav a { color: #222; text-decoration: none; }
        nav a:first-child { margin-left: -4px; }
        .wide { --cell: 32px; }
        .find { display: flex; align-items: center; width: 105px; height: 20px; margin-bottom: 1px; border: 1px solid #aaa; border-left: 0; box-sizing: border-box; }
        .find input { flex: 1; min-width: 0; border: 0; padding: 0; font: inherit; font-size: 11px; color: #222; text-indent: -7px; }
        .find nx-icon { width: 18px; height: 18px; }
        .find + tool-drop { margin: 0 2px 0 4px; }
        .zoom { width: 48px; height: 20px; margin: 0 4px 1px 3px; }
        .s1 { margin-left: 3px; }
        .s2 { margin-left: 19px; flex: 1; }
        .s3 { padding-left: 5px; }
        .s4 { margin-left: 34px; }
        .s5 { margin-left: 161px; flex: 1; }
        .s6 { margin-left: -11px; }
        .s7 { margin-left: 90px; flex: 1; }
        .s8 { padding-left: 3px; border: 0; }
        .stage { display: flex; flex: 1; min-height: 0; border-top: 1px solid #888; }
        .side { flex: none; width: 29px; display: flex; flex-direction: column; --cell: 24px; box-sizing: border-box; border-right: 1px solid #ddd; }
        .side::before { content: ""; flex: none; height: 3px; margin: 3px 4px 1px 0; background: radial-gradient(circle, #aaa 1px, transparent 2px) 0 0 / 4px 3px; }
        .side i { width: 0; margin: 6px 0 0 3px; border: 3px solid transparent; border-left: 0; border-right: 4px solid #111; }
        cam-viewport { flex: 1; }
        .bottom { flex: none; display: flex; height: 22px; align-items: flex-start; overflow: hidden; }
        .bottom tool-strip { --cell-height: 30px; height: 30px; margin-top: 1px; }
        .b0 { margin-left: -5px; width: 54px; }
    </style>
    <div class="caption"></div>
    <nav>
        <a href="#">选项(<u>P</u>)</a><a href="#">窗口(<u>O</u>)</a><a href="#">GC工具箱</a><a href="#">燕秀UG模具7.05</a>
        <a href="#">星空 V6.936F</a><a href="#">帮助(<u>H</u>)</a><a href="#">机明软件</a><a href="#">HB_MOULD <u>M</u>6.6</a>
    </nav>
    <tool-row class="wide">
        <tool-strip>
            <div class="find"><input aria-label="查找命令" value="找命令"><nx-icon name="search"></nx-icon></div>
            <tool-drop low></tool-drop>
        </tool-strip>
        <tool-strip class="s1" grip>
            <combo-box class="zoom"><select aria-label="图层"><option>10</option></select></combo-box>
            <tool-button icon="layers"></tool-button><tool-button icon="csys"></tool-button><tool-drop></tool-drop><tool-sep></tool-sep>
            <tool-button icon="hand"></tool-button><tool-button icon="palette"></tool-button><tool-sep></tool-sep>
            <tool-button icon="play"></tool-button><tool-drop></tool-drop><tool-sep></tool-sep>
            <tool-button icon="dims"></tool-button><tool-drop></tool-drop>
            <tool-button icon="ruler"></tool-button><tool-drop low></tool-drop>
        </tool-strip>
        <tool-strip class="s2" grip>
            <tool-button icon="fit"></tool-button><tool-drop></tool-drop><tool-button icon="device"></tool-button>
        </tool-strip>
    </tool-row>
    <tool-row>
        <tool-strip class="s3">
            <tool-sep></tool-sep><tool-button icon="post"></tool-button><tool-button icon="shopDoc"></tool-button>
            <tool-button icon="clock"></tool-button><tool-drop low></tool-drop>
        </tool-strip>
        <tool-strip class="s4" grip>
            <tool-button icon="progView" active></tool-button><tool-button icon="toolView"></tool-button>
            <tool-button icon="geomView"></tool-button><tool-button icon="methodView"></tool-button><tool-drop low></tool-drop>
        </tool-strip>
        <tool-strip class="s5" grip>
            <tool-button icon="holeTarget"></tool-button><tool-button icon="holeA"></tool-button><tool-drop></tool-drop><tool-button icon="holeB"></tool-button>
        </tool-strip>
    </tool-row>
    <tool-row>
        <tool-strip class="s6">
            <tool-button icon="tube"></tool-button><tool-button icon="cubeRed"></tool-button><tool-button icon="mirror"></tool-button>
            <tool-button icon="splitA"></tool-button><tool-button icon="splitB"></tool-button>
            <tool-button icon="rectSel"></tool-button><tool-drop></tool-drop><tool-button icon="hex"></tool-button><tool-drop></tool-drop>
            <tool-button icon="xyz"></tool-button><tool-button icon="target"></tool-button><tool-button icon="ring"></tool-button>
            <tool-button icon="text"></tool-button><tool-button icon="bbox"></tool-button><tool-button icon="lamp"></tool-button>
            <tool-button icon="circle"></tool-button><tool-drop low></tool-drop>
        </tool-strip>
        <tool-strip class="s7" grip><tool-button icon="tm" active></tool-button></tool-strip>
    </tool-row>
    <tool-row>
        <tool-strip class="s8">
            <tool-button icon="dashed"></tool-button><tool-drop></tool-drop><tool-sep></tool-sep>
            <tool-button icon="blocks"></tool-button><tool-button icon="cubeBlue" active></tool-button>
        </tool-strip>
    </tool-row>
    <div class="stage">
        <div class="side"></div>
        <cam-viewport></cam-viewport>
    </div>
    <div class="bottom">
        <tool-strip class="b0"><tool-button icon="cubes"></tool-button><tool-drop></tool-drop></tool-strip>
        <tool-strip grip>
            <tool-button icon="rainbow"></tool-button><tool-drop></tool-drop><tool-button icon="chain"></tool-button>
            <tool-button icon="plus"></tool-button><tool-drop></tool-drop><tool-button icon="extrude"></tool-button><tool-drop></tool-drop>
            <tool-button icon="boss"></tool-button><tool-button icon="door"></tool-button><tool-button icon="crate"></tool-button><tool-drop></tool-drop>
        </tool-strip>
    </div>
    <site-mark></site-mark>
`, (el, root) => {
    const names = ['stackGreen', 'sheets', 'toolCrt', 'generate', 'opCopy', 'opPages', 'opMove', 'drillDown', 'opWrench',
        'mcImport', 'post', 'mcTable', 'ballWrench', 'editA', 'pencil', 'insert', 'pages', 'teal', 'thermo', 'printer',
        'swap', 'drills', 'panel', 'history'];
    root.querySelector('.side').innerHTML = names.map(n => `<tool-button icon="${n}"></tool-button>`).join('') + '<i></i>';
});

define('cam-app', `
    <style>
        :host { display: grid; grid-template-columns: 58px 328px minmax(0, 1fr); grid-template-rows: 100vh; height: 100vh; overflow: hidden; }
    </style>
    <op-navigator></op-navigator>
    <mill-dialog></mill-dialog>
    <work-area></work-area>
`);
</script>
</body>
</html>
